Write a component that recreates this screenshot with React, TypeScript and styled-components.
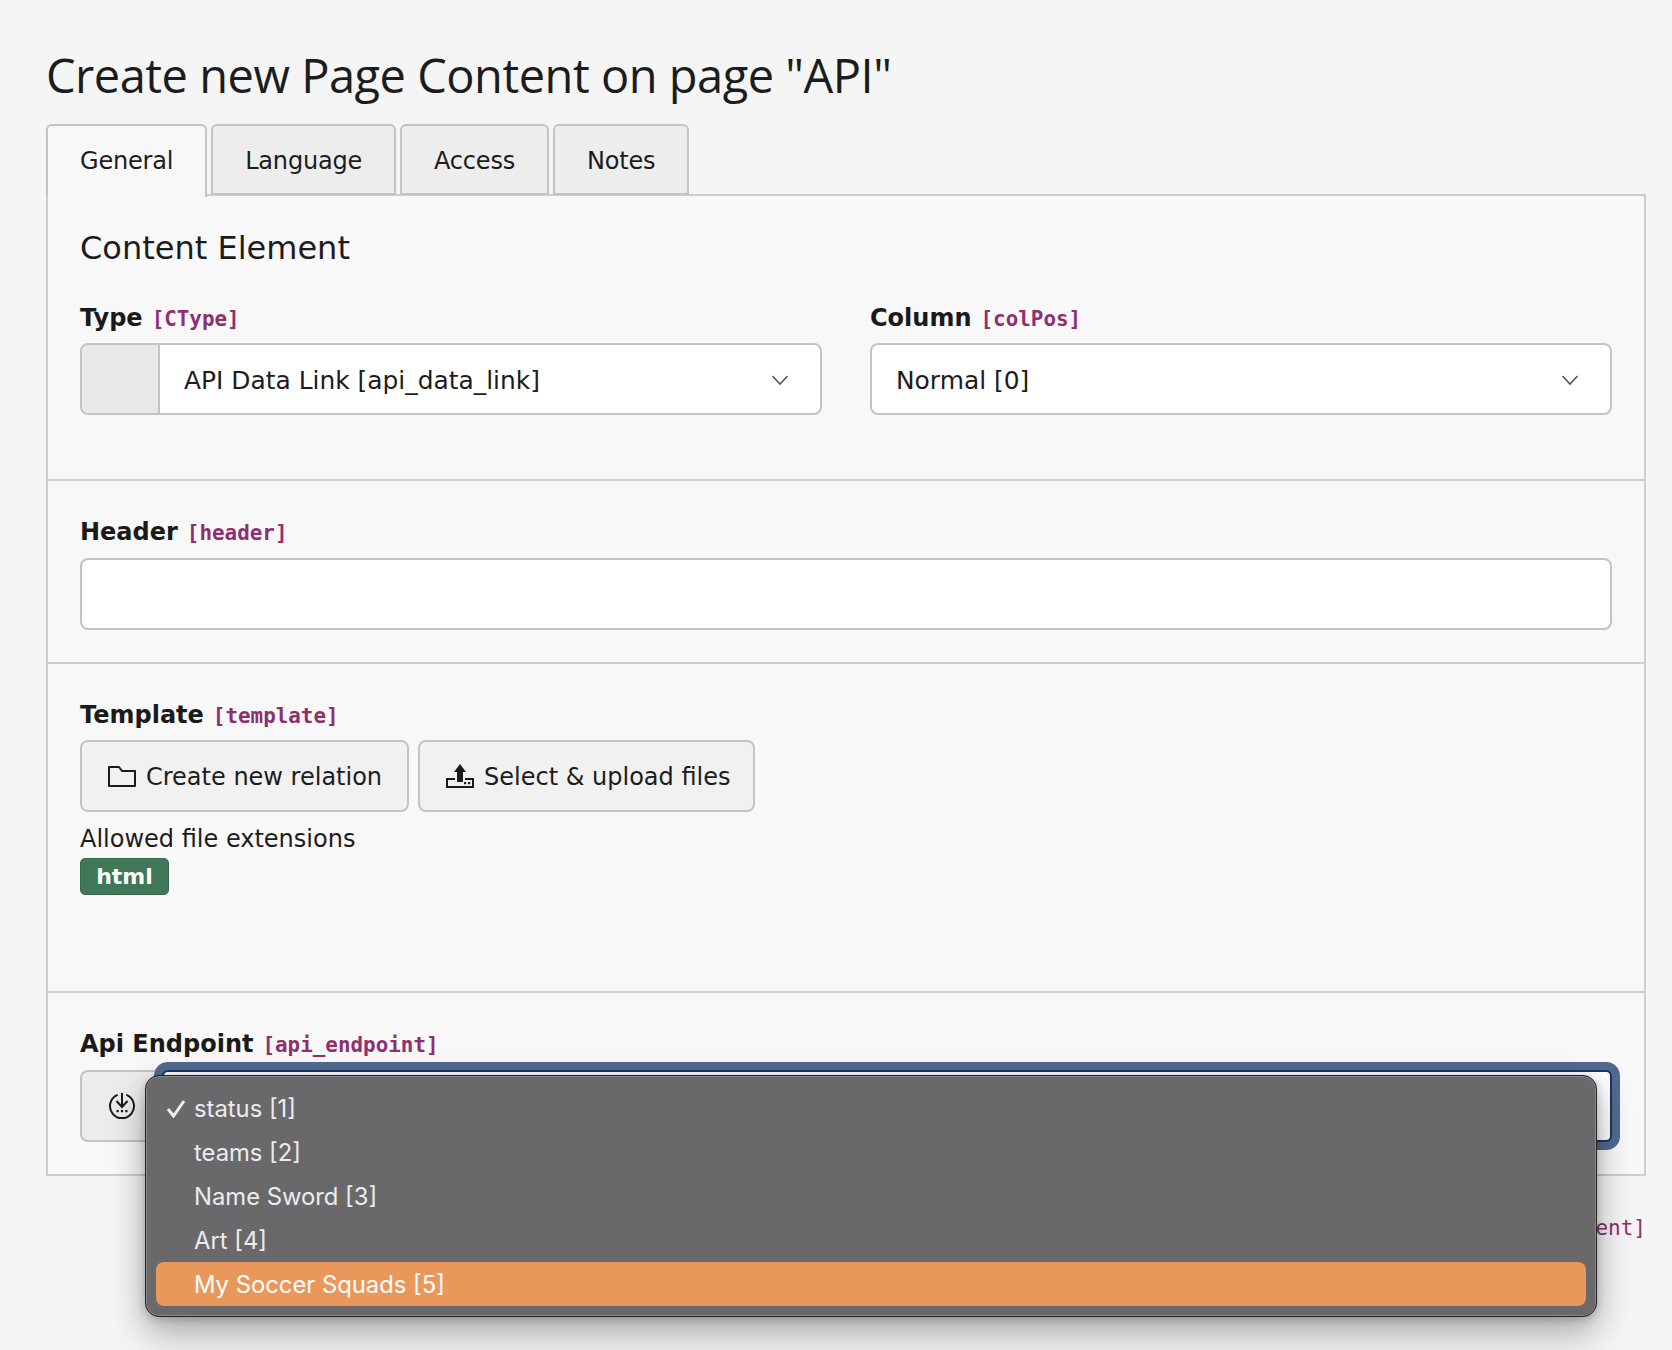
import styled, { createGlobalStyle } from 'styled-components';

const GlobalStyle = createGlobalStyle`
  html, body { margin: 0; padding: 0; background: #f5f5f5; }
  body { font-family: "DejaVu Sans", Verdana, sans-serif; color: #1a1a1a; overflow: hidden; }
`;

// ─── Page ─────────────────────────────────────────────────────────────────────

const Page = styled.div`
  width: 1672px; height: 1350px; box-sizing: border-box; padding: 45px 26px 0 46px; overflow: hidden;
`;

const PageTitle = styled.h1`
  margin: 0 0 19px; font-family: "Open Sans", sans-serif; font-weight: 400; font-size: 47px; line-height: 60px;
  letter-spacing: -0.49px; color: #1c1c1c;
`;

// ─── Tabs ─────────────────────────────────────────────────────────────────────

const TabBar = styled.div`
  display: flex; gap: 4px; align-items: flex-end; height: 71px; margin-bottom: -1px; position: relative; z-index: 1;
`;

const Tab = styled.div<{ $active?: boolean }>`
  box-sizing: border-box; height: ${({ $active }) => ($active ? '73px' : '71px')};
  margin-bottom: ${({ $active }) => ($active ? '-2px' : '0')};
  padding: ${({ $active }) => ($active ? '0 32px 2px' : '3px 32px 0')};
  display: flex; align-items: center; font-size: 24px;
  letter-spacing: -0.2px; color: #1c1c1c;
  border: 2px solid #c3c3c3; border-bottom: ${({ $active }) => ($active ? 'none' : '2px solid #c3c3c3')};
  border-radius: 6px 6px 0 0;
  background: ${({ $active }) => ($active ? '#f8f8f8' : '#ededed')};
`;

// ─── Panel ────────────────────────────────────────────────────────────────────

const Panel = styled.div`
  box-sizing: border-box; border: 2px solid #cdcdcd; background: #f8f8f8; height: 982px;
`;

const Section = styled.div<{ $height: number; $top: number; $last?: boolean }>`
  box-sizing: border-box; height: ${({ $height }) => $height}px; padding: ${({ $top }) => $top}px 32px 0;
  border-bottom: ${({ $last }) => ($last ? 'none' : '2px solid #cdcdcd')};
`;

const SectionTitle = styled.h2`
  margin: 0 0 33px; font-weight: 400; font-size: 32px; line-height: 44px; color: #1c1c1c;
`;

const FieldRow = styled.div`
  display: grid; grid-template-columns: 1fr 1fr; gap: 48px;
`;

const Label = styled.div<{ $gap?: number }>`
  display: flex; align-items: baseline; gap: 9px; height: 30px; line-height: 30px;
  margin-bottom: ${({ $gap }) => $gap ?? 10}px;
  font-size: 24px; font-weight: 700; color: #1a1a1a;
`;

const FieldName = styled.code`
  font-family: "DejaVu Sans Mono", monospace; font-size: 20.9px; font-weight: 700; color: #8f2f6f;
`;

// ─── Controls ─────────────────────────────────────────────────────────────────

const SelectBox = styled.div`
  box-sizing: border-box; height: 72px; display: flex; align-items: stretch;
  border: 2px solid #c3c3c3; border-radius: 8px; background: #fff; overflow: hidden;
`;

const SelectIcon = styled.div`
  width: 76px; flex: none; background: #e8e8e8; border-right: 2px solid #c3c3c3;
`;

const SelectValue = styled.div`
  flex: 1; display: flex; align-items: center; justify-content: space-between; padding: 2px 31px 0 24px;
  font-size: 24.9px; color: #1c1c1c;
`;

const TextInput = styled.div`
  box-sizing: border-box; height: 72px; border: 2px solid #c3c3c3; border-radius: 8px; background: #fff;
`;

const ButtonRow = styled.div`
  display: flex; gap: 9px; margin-bottom: 12px;
`;

const Button = styled.div<{ $right: number }>`
  box-sizing: border-box; height: 72px; display: flex; align-items: center; gap: 10px;
  padding: 2px ${({ $right }) => $right}px 0 26px;
  border: 2px solid #c3c3c3; border-radius: 8px; background: #f1f1f1; font-size: 24px; color: #1c1c1c;
  svg { margin-top: -2px; }
`;

const HelpText = styled.div`
  font-size: 24px; line-height: 30px; margin-bottom: 4px; color: #1c1c1c;
`;

const Badge = styled.span`
  box-sizing: border-box; display: inline-flex; align-items: center; justify-content: center;
  width: 89px; height: 37px; border-radius: 5px; background: #3f7757; border: 1px solid #366a4c;
  color: #fff; font-size: 22px; font-weight: 700;
`;

const InputGroup = styled.div`
  position: relative; display: flex; height: 72px;
`;

const Addon = styled.div`
  box-sizing: border-box; width: 82px; flex: none; display: flex; align-items: center; padding-left: 26px;
  border: 2px solid #c3c3c3; border-right: none; border-radius: 8px 0 0 8px; background: #ececec;
`;

const FocusedInput = styled.div`
  flex: 1; box-sizing: border-box; border: 2px solid #1a3566; border-radius: 6px; background: #fff;
  box-shadow: 0 0 0 8px #526a90;
`;

// ─── Native select popup ──────────────────────────────────────────────────────

const Popup = styled.div`
  position: absolute; left: 65px; top: 5px; width: 1452px; height: 242px; box-sizing: border-box; padding: 10px;
  border: 1px solid #222; border-radius: 14px; background: #69696b;
  box-shadow: inset 0 0 0 1px #8a8a8c, 0 16px 36px rgba(0,0,0,0.32), 0 2px 10px rgba(0,0,0,0.2);
`;

const PopupItem = styled.div<{ $highlighted?: boolean }>`
  position: relative; height: 44px; box-sizing: border-box; display: flex; align-items: center; padding-left: 38px;
  border-radius: 8px; font-family: "Inter", sans-serif; font-size: 23.8px;
  color: ${({ $highlighted }) => ($highlighted ? '#fff' : '#ececec')};
  background: ${({ $highlighted }) => ($highlighted ? '#ea975b' : 'transparent')};
`;

const CheckMark = styled.svg`
  position: absolute; left: 10px; top: 13px;
`;

const Footnote = styled.div`
  margin-top: 37px; text-align: right; font-family: "DejaVu Sans Mono", monospace;
  font-size: 21px; line-height: 30px; color: #8f2f6f;
`;

// ─── Icons ────────────────────────────────────────────────────────────────────

const Chevron = () => (
  <svg width="18" height="12" viewBox="0 0 18 12" fill="none">
    <path d="M1.5 2 L9 10 L16.5 2" stroke="#555" strokeWidth="1.6" />
  </svg>
);

const FolderIcon = () => (
  <svg width="28" height="21" viewBox="0 0 28 21" fill="none">
    <path d="M1 20 V1 H11 L14 5 H27 V20 Z" stroke="#1a1a1a" strokeWidth="2" strokeLinejoin="round" />
  </svg>
);

const UploadIcon = () => (
  <svg width="28" height="24" viewBox="0 0 28 24" fill="none">
    <path d="M14 0 L20 8 H17 V18 H11 V8 H8 Z" fill="#1a1a1a" />
    <path d="M9 15 H1 V23 H27 V15 H19" stroke="#1a1a1a" strokeWidth="2" />
    <rect x="18" y="18" width="2.2" height="2.2" fill="#1a1a1a" />
    <rect x="22" y="18" width="2.2" height="2.2" fill="#1a1a1a" />
  </svg>
);

const DownloadCircleIcon = () => (
  <svg width="28" height="28" viewBox="0 0 28 28" fill="none">
    <path d="M9 3.2 A12 12 0 1 0 19 3.2" stroke="#1a1a1a" strokeWidth="2" strokeLinecap="round" />
    <path d="M14 1 V14 M8.5 9 L14 15 L19.5 9" stroke="#1a1a1a" strokeWidth="2" />
    <rect x="8.5" y="18" width="2.2" height="2.2" fill="#1a1a1a" />
    <rect x="12.9" y="18" width="2.2" height="2.2" fill="#1a1a1a" />
    <rect x="17.3" y="18" width="2.2" height="2.2" fill="#1a1a1a" />
  </svg>
);

// ─── Data ─────────────────────────────────────────────────────────────────────

const tabs = ['General', 'Language', 'Access', 'Notes'];
const endpoints = ['status [1]', 'teams [2]', 'Name Sword [3]', 'Art [4]', 'My Soccer Squads [5]'];

// ─── Component ────────────────────────────────────────────────────────────────

export default function App() {
  return (
    <Page>
      <GlobalStyle />
      <PageTitle>Create new Page Content on page "API"</PageTitle>

      <TabBar>
        {tabs.map((tab, i) => (
          <Tab key={tab} $active={i === 0}>{tab}</Tab>
        ))}
      </TabBar>

      <Panel>
        <Section $height={285} $top={30}>
          <SectionTitle>Content Element</SectionTitle>
          <FieldRow>
            <div>
              <Label>Type <FieldName>[CType]</FieldName></Label>
              <SelectBox>
                <SelectIcon />
                <SelectValue>API Data Link [api_data_link]<Chevron /></SelectValue>
              </SelectBox>
            </div>
            <div>
              <Label>Column <FieldName>[colPos]</FieldName></Label>
              <SelectBox>
                <SelectValue>Normal [0]<Chevron /></SelectValue>
              </SelectBox>
            </div>
          </FieldRow>
        </Section>

        <Section $height={183} $top={36}>
          <Label $gap={11}>Header <FieldName>[header]</FieldName></Label>
          <TextInput />
        </Section>

        <Section $height={329} $top={36}>
          <Label $gap={10}>Template <FieldName>[template]</FieldName></Label>
          <ButtonRow>
            <Button $right={25}><FolderIcon />Create new relation</Button>
            <Button $right={22}><UploadIcon />Select &amp; upload files</Button>
          </ButtonRow>
          <HelpText>Allowed file extensions</HelpText>
          <Badge>html</Badge>
        </Section>

        <Section $height={181} $top={36} $last>
          <Label $gap={11}>Api Endpoint <FieldName>[api_endpoint]</FieldName></Label>
          <InputGroup>
            <Addon><DownloadCircleIcon /></Addon>
            <FocusedInput />
            <Popup>
              {endpoints.map((item, i) => (
                <PopupItem key={item} $highlighted={i === endpoints.length - 1}>
                  {i === 0 && (
                    <CheckMark width="20" height="19" viewBox="0 0 20 19" fill="none">
                      <path d="M2 10 L7.5 17 L18 2" stroke="#eee" strokeWidth="3" />
                    </CheckMark>
                  )}
                  {item}
                </PopupItem>
              ))}
            </Popup>
          </InputGroup>
        </Section>
      </Panel>

      <Footnote>[tx_content_element]</Footnote>
    </Page>
  );
}
